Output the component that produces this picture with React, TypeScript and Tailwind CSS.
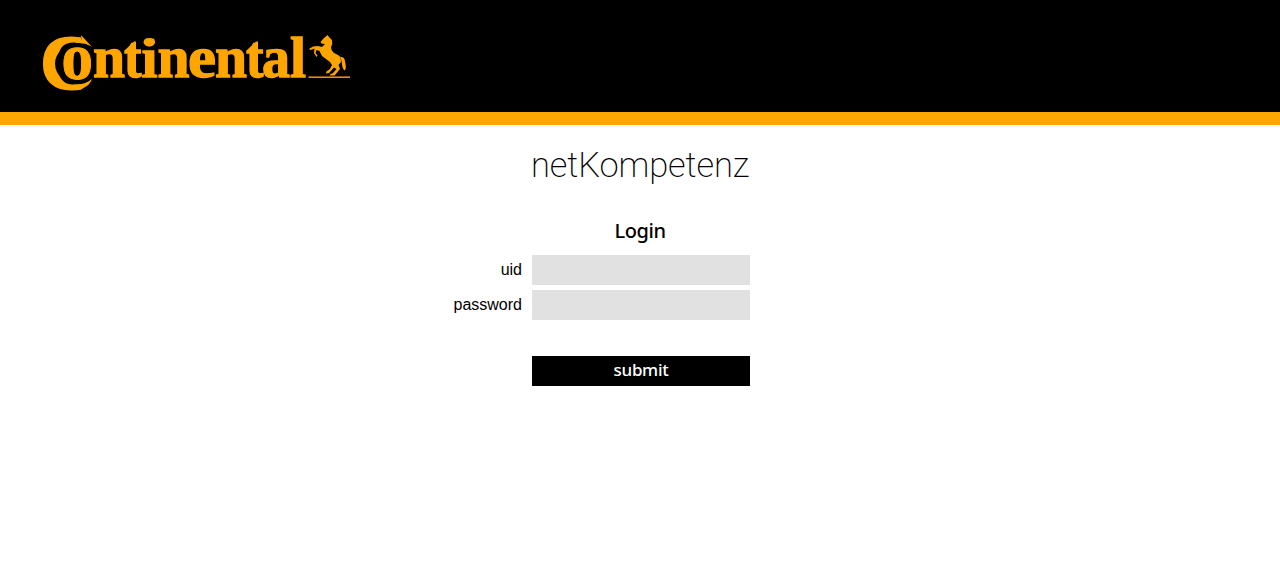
import React from "react";

type Glyph = { ch: string; x: number; w: number; size: number };

const glyphs: Glyph[] = [
  { ch: "n", x: 50, w: 32, size: 59 },
  { ch: "t", x: 81, w: 17.5, size: 59 },
  { ch: "i", x: 98.5, w: 16, size: 57 },
  { ch: "n", x: 114.5, w: 32, size: 59 },
  { ch: "e", x: 145, w: 28, size: 59 },
  { ch: "n", x: 172, w: 32, size: 59 },
  { ch: "t", x: 203, w: 17.5, size: 59 },
  { ch: "a", x: 219, w: 28, size: 59 },
  { ch: "l", x: 247, w: 16, size: 56 },
];

function Logo() {
  return (
    <svg
      width="310"
      height="64"
      viewBox="0 0 310 64"
      aria-label="Continental"
      className="block overflow-visible fill-[#ffa500] font-['Liberation_Serif',serif] font-bold"
    >
      <text x="-3" y="53.5" fontSize="78" textLength="57" lengthAdjust="spacingAndGlyphs" className="stroke-[#ffa500]" strokeWidth="1.8">C</text>
      <ellipse cx="36" cy="28.7" rx="24" ry="20.8" className="fill-black" />
      <path d="M38 0 H54 V16 H48.5 L38 6 Z M42 50 L47 44 H54 V58 H36 Z" className="fill-black" />
      <path d="M33 3 L38.5 4.5 L38 0 L48.8 11.8 C44 8.5 40 7.5 33 8 Z" />
      <path d="M30 49.5 C38 50 44 48 48.8 44 C47.5 49.5 42 53.5 34 55.2 Z" />
      <text x="18.5" y="44" fontSize="65" textLength="31.5" lengthAdjust="spacingAndGlyphs" className="stroke-[#ffa500]" strokeWidth="1">o</text>
      {glyphs.map((g, i) => (
        <text key={i} x={g.x} y="42.4" fontSize={g.size} textLength={g.w} lengthAdjust="spacingAndGlyphs" className="stroke-[#ffa500]" strokeWidth="1.3">
          {g.ch}
        </text>
      ))}
      <path d="M81.5 15.5 L91 6.5 H93 V16 H81.5 Z M203.5 15.5 L213 6.5 H215 V16 H203.5 Z" />
      <rect x="99" y="0" width="14" height="3.6" className="fill-black" />
      <ellipse cx="106.3" cy="7.2" rx="5.7" ry="4.2" />
      <rect x="265.5" y="41.5" width="41.5" height="1.4" />
      <path d="M284.5 0 L286 2 L289 5 L289.3 9 L288 12 L288.5 15 L291 18 L295 20 L297.5 22 L298 27 L295.5 30 L297 34 L291.5 40.5 L287 40.6 L287 39.6 L290 38 L293.5 34 L291 32.5 L286 38 L283 38.5 L283.5 36.5 L287 34 L289 30 L287 27 L283 24 L279 21 L276.5 16 L273.5 15 L272.5 18 L274.5 20.5 L273.5 22 L271 18 L271.5 13.5 L267.5 15 L266 14 L270 11.5 L275 11 L279 12 L282 9 L278.5 8.5 L277.5 7 L281 3 Z" />
      <path d="M297.5 22 C301.5 21.5 302 25 302.5 29 C303 32 303 34 301.8 35.5 C298.5 33 299.5 29 298.5 26 Z" />
    </svg>
  );
}

export default function App() {
  return (
    <div className="min-h-[573px] w-full bg-white text-black">
      <header className="h-[125px] border-b-[13px] border-[#ffa500] bg-black pt-[35px] pl-[43px]">
        <Logo />
      </header>
      <main className="ml-[432px] w-[318px]">
        <h1 className="ml-[99px] pt-4 font-['Roboto',sans-serif] text-[34.5px] leading-[48px] font-extralight tracking-[-0.1px] whitespace-nowrap">netKompetenz</h1>
        <h2 className="ml-[98px] pt-[26px] text-center font-['Noto_Sans',sans-serif] text-[20px] leading-8 font-medium tracking-[-0.4px]">Login</h2>
        <form className="mt-2 flex flex-col" onSubmit={(e) => e.preventDefault()}>
          <div className="flex h-[30px] items-center justify-end gap-[10px]">
            <label htmlFor="uid" className="font-['Liberation_Sans',sans-serif] text-base">uid</label>
            <input id="uid" className="h-[30px] w-[218px] bg-[#e1e1e1] outline-none" />
          </div>
          <div className="mt-[5px] flex h-[30px] items-center justify-end gap-[10px]">
            <label htmlFor="password" className="font-['Liberation_Sans',sans-serif] text-base">password</label>
            <input id="password" type="password" className="h-[30px] w-[218px] bg-[#e1e1e1] outline-none" />
          </div>
          <button className="mt-9 ml-[100px] h-[30px] w-[218px] bg-black pb-[2px] font-['Noto_Sans',sans-serif] text-[17px] leading-6 font-medium tracking-[-0.3px] text-white">submit</button>
        </form>
      </main>
    </div>
  );
}
